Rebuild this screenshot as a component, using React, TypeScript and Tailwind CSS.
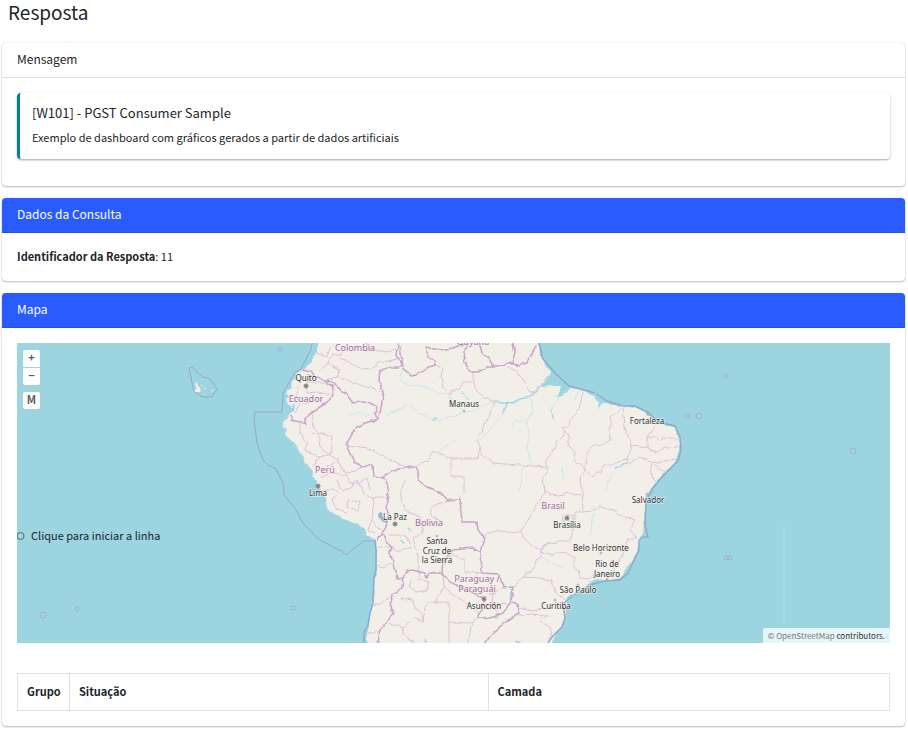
import type { ReactNode } from 'react'

const OCEAN = '#9cd5e0'
const LAND = '#f2efe9'

const COUNTRY_BORDERS = [
  'M303 370 311 372 317 378 325 380 327 383 334 387 333 395 327 403 318 408 310 413 305 421 305 425 300 422 291 420 291 415',
  'M325 380 330 381 337 385 342 392 347 395 353 403 362 402 370 403 377 407 375 413 377 419',
  'M378 419 381 408 383 392 379 380 380 370 387 368 398 368 403 365 397 357 398 343',
  'M378 419 368 422 355 428 350 438 347 443 347 448 352 456 355 462 362 468 368 465 373 465 374 477 383 477 393 470 407 468 418 467 418 480 427 487 440 492 448 500 460 500 462 522 477 522 478 530 485 538 481 552 482 573',
  'M400 347 403 367 410 376 417 375 427 368 435 365 434 361 428 357 425 347 440 350 453 348 463 344',
  'M466 343 464 360 470 372 478 372 487 367 497 367 508 363 518 365 527 363 535 347',
  'M480 343 482 353 490 360 493 367',
  'M513 343 515 353 512 363',
  'M383 477 389 488 387 500 386 507 388 513 388 523 383 532 377 540',
  'M383 532 387 543 392 547 390 553 392 558 395 568 398 579 403 578 402 588 392 595 391 606 393 613 386 624 380 630 378 643',
  'M403 578 407 571 412 570 425 573 427 578 429 573 442 573 450 582 467 590 484 598 482 608 477 617 490 618 503 613 511 602',
  'M442 573 443 560 453 550 472 548 481 553',
  'M482 573 498 574 501 580 503 588 513 587 511 602 517 603 518 613 502 625 493 633 485 643',
]

const STATE_BORDERS = [
  // Brasil
  'M435 365 443 368 441 376 443 388 450 395 452 390 460 390 463 382 473 382 473 372',
  'M473 382 475 390 484 397 495 402 477 440 480 447 483 456 492 463 547 467',
  'M480 447 478 458 451 458 451 477 464 477 464 493 460 500',
  'M451 458 447 457 440 452 433 452 428 460 417 465 408 467 390 461',
  'M348 445 367 448 383 456 400 465',
  'M508 367 518 372 525 383 529 391 532 393 537 392 547 378',
  'M548 467 543 478 545 493 536 505 530 517 522 530 523 537 532 546 540 550 545 544 550 543',
  'M522 533 507 532 499 530 485 535',
  'M542 552 533 568 523 577 513 588',
  'M523 577 540 578 552 580 555 592 565 600',
  'M518 615 533 614 550 617',
  'M518 608 533 611 550 607',
  'M583 392 580 406 577 413 570 420 569 425 562 428 570 437 568 445 575 452 575 462 582 466 585 470 580 477 582 493 583 512',
  'M565 430 563 437 556 442 555 448 547 460 547 467',
  'M620 408 610 418 611 425 609 430 610 440 602 445 596 444 588 450 585 470',
  'M623 408 625 427 631 445 632 449 627 458 612 465 602 465 603 472 597 472 593 477 585 470',
  'M655 425 650 432 647 438 647 448 631 446',
  'M647 438 655 437 660 441 663 437 678 439',
  'M647 448 657 452 665 448 678 447',
  'M627 458 629 463 640 457 648 460 657 463 668 460 677 459',
  'M652 463 650 473 655 482 M652 463 667 473',
  'M543 480 545 491 551 494 558 495 568 493 580 495',
  'M583 512 592 511 600 506 606 509 613 510 620 515 635 520 630 530 637 538 628 538 625 548 620 560 612 573 593 576 588 579 580 578 578 570 573 566 575 558 568 554 558 553 550 555 540 553 547 543 558 542 570 540 573 530 570 525 575 519 575 512 583 512',
  'M563 515h10v6h-10z',
  'M540 622 550 627 552 633 548 640',
  // Colombia, Ecuador
  'M317 353 327 357 330 348 335 345',
  'M320 370 328 363 332 355 340 355 345 347',
  'M328 363 334 368 340 370 337 377 325 380',
  'M340 358 346 360 353 365 362 369 373 368 378 362 389 361 400 358',
  'M337 377 353 382 365 387 375 389 383 393',
  'M365 343 373 350 387 352 400 347',
  'M300 377 308 383 325 383 M298 387 297 395 300 403 295 412',
  'M308 383 307 393 318 392 330 395 M302 403 318 402 M292 396 305 398',
  // Perú
  'M312 412 313 427 318 433 320 447 330 455',
  'M300 422 300 433 307 443 305 450 318 457 315 465',
  'M313 433 323 434 332 437 330 455 318 457',
  'M330 455 338 460 328 467 332 473 321 477',
  'M338 460 340 469 350 473 362 468',
  'M332 473 347 475 350 483 360 483 367 478 370 490',
  'M322 492 332 488 340 493 332 500 337 510 347 513',
  'M348 500 360 502 358 510 348 508 348 500',
  'M336 480 343 490 350 489 357 480 363 493 373 497 387 497',
  'M373 497 374 509 372 520 368 530 M372 520 378 528 383 532 M368 530 375 533',
  // Chile
  'M377 547 390 547 M376 565 383 567 392 563 M373 605 383 603 387 599 393 598 M368 633 378 633',
  // Bolivia
  'M405 480 400 493 402 503 405 510 420 517 423 533 413 537 418 557 418 572',
  'M442 523 431 515 431 508 437 504 447 502 460 500',
  'M390 535 405 535 408 541 410 547 397 552 390 547',
  // Argentina, Paraguay
  'M412 580 410 587 417 592 428 590 428 582 418 578 419 572',
  'M400 598 413 600 415 608 422 613 423 622 425 607 427 602 449 602 449 643',
  'M443 573 444 588 435 602 M444 588 462 600 478 612',
  'M449 622 472 623 477 617 M472 623 468 643',
  'M390 623 403 628 405 636 415 643 M423 622 413 618 407 623 403 628',
  'M445 557 456 556 465 560 465 572 482 573',
  'M484 598 493 593 503 588 M493 593 492 606 497 613 M484 606 505 603 509 606',
]

const RIVERS = [
  'M390 412 398 411 407 405 417 411 427 418 436 421 450 417 465 412 477 410 486 404 495 402',
  'M402 370 401 381 408 385 427 387 440 393 447 395 455 404 462 410',
  'M507 403 503 415 490 429 480 440',
  'M530 398 533 412 524 420 512 423 513 428 M527 420 529 436 527 448 531 463',
  'M553 418 552 407 560 396',
  'M540 556 550 562 563 568 M533 568 525 575 M540 550 550 543',
  'M350 415 360 412 366 417 375 413 M385 417 400 408',
  'M612 475 608 481 606 490 M562 467 564 480',
  'M523 468 522 480 519 490 M590 535 593 515 601 507',
  'M575 400 579 391 M456 440 440 450',
]

const WIDE_WATER = [
  'M495 401 503 402 513 403 520 399 530 397 538 390 544 383 548 380',
  'M507 403 504 413 M462 393 468 398 M552 411 553 419 M615 468 620 466 627 463',
  'M548 377 555 385 563 387 M538 387 545 387 M561 394 567 389 M595 394 600 405 606 402',
  'M402 540 404 543 M408 529 410 531 M433 420 436 417',
  'M424 640 427 641 M516 642 520 642 M495 618 498 617',
  'M512 590 510 600 M603 580 590 582 M568 598 580 590',
]

const ATOLLS = [
  [280, 349, 2], [43, 615, 3], [77, 609, 2], [726, 376, 2], [687, 416, 2],
  [699, 416, 3], [853, 451, 3], [726, 558, 2], [730, 558, 2],
]

type Place = { name: string; x: number; y: number; dot?: [number, number]; capital?: boolean }

const CITIES: Place[] = [
  { name: 'Quito', x: 306, y: 381, dot: [306, 386], capital: true },
  { name: 'Lima', x: 318, y: 496, dot: [318, 486], capital: true },
  { name: 'La Paz', x: 395, y: 520, dot: [395, 524], capital: true },
  { name: 'Manaus', x: 464, y: 407, dot: [464, 411] },
  { name: 'Santa', x: 437, y: 544, dot: [437, 536] },
  { name: 'Cruz de', x: 437, y: 554 },
  { name: 'la Sierra', x: 437, y: 563 },
  { name: 'Asunción', x: 484, y: 609, dot: [484, 599], capital: true },
  { name: 'Fortaleza', x: 647, y: 424, dot: [648, 414] },
  { name: 'Salvador', x: 648, y: 503, dot: [647, 494] },
  { name: 'Brasília', x: 567, y: 528, dot: [567, 518], capital: true },
  { name: 'Belo Horizonte', x: 601, y: 551, dot: [601, 553] },
  { name: 'Rio de', x: 607, y: 567 },
  { name: 'Janeiro', x: 607, y: 577, dot: [607, 579] },
  { name: 'São Paulo', x: 578, y: 593, dot: [578, 585] },
  { name: 'Curitiba', x: 556, y: 609, dot: [555, 600] },
]

const COUNTRIES: Place[] = [
  { name: 'Colombia', x: 355, y: 351 },
  { name: 'Guyana', x: 473, y: 345 },
  { name: 'Ecuador', x: 306, y: 402 },
  { name: 'Perú', x: 325, y: 473 },
  { name: 'Bolivia', x: 429, y: 526 },
  { name: 'Brasil', x: 553, y: 509 },
  { name: 'Paraguay /', x: 477, y: 582 },
  { name: 'Paraguái', x: 477, y: 592 },
]

function MapDrawing() {
  return (
    <svg
      viewBox="17 343 873 300"
      preserveAspectRatio="xMidYMid slice"
      className="block h-full w-full"
      role="img"
      aria-label="Mapa da América do Sul"
    >
      {/* roughens borders and coast so they don't read as straight segments */}
      <filter id="rough" filterUnits="userSpaceOnUse" x="17" y="343" width="873" height="300">
        <feTurbulence type="fractalNoise" baseFrequency="0.14" numOctaves="2" seed="4" />
        <feDisplacementMap in="SourceGraphic" scale="4" xChannelSelector="R" yChannelSelector="G" />
      </filter>

      <rect x="17" y="343" width="873" height="300" fill={OCEAN} />

      {/* South America */}
      <path
        fill={LAND}
        filter="url(#rough)"
        d="M317 335V353L312 358 312 362 305 368 301 371 295 373 295 379 292 382 291 388 287 392 289 397 286 400 288 404 292 407 295 404 294 411 290 413 286 419 283 421 284 427 287 430 285 435 293 442 302 455 307 465 312 473 316 482 318 487 322 492 325 498 327 508 333 513 340 517 348 521 355 523 365 529 367 535 375 540 377 550 377 570 375 577 374 587 373 603 370 617 368 630 366 650H548L558 630 565 620 566 605 568 598 580 590 593 582 605 580 620 578 627 568 637 552 638 542 643 533 644 523 645 500 648 493 653 486 658 480 662 476 675 462 679 450 679 440 675 427 662 425 652 418 645 412 635 407 623 406 612 405 607 403 602 404 599 408 597 401 594 397 583 390 575 388 567 390 562 396 557 397 560 391 563 387 549 385 543 387 541 384 547 379 550 375 550 370 542 361 540 352 535 335Z"
      />
      {/* keeps the clipped edges of the land solid */}
      <path fill={LAND} d="M319 343H533V348H319ZM369 638H547V643H369Z" />
      <g fill={LAND}>
        <path d="M195 384l2-2 1 4 3 3-1 3-5 0-1-2 3-1z" />
        <path d="M201 385h2v1h-2zM204 388h2v1h-2zM212 390l2-1-1 2-2 1zM202 379h1v1h-1zM204 394h1v1h-1z" />
      </g>

      {/* Maritime limits */}
      <g fill="none" stroke="#99a5c9" strokeLinejoin="round">
        <path d="M312 343 311 349 303 365 300 370 295 372 283 393 282 412H255L254 420 257 443 263 460 268 465 276 469 283 483 284 495 295 508 303 523 318 539 335 548 342 551 346 555 355 548 363 541H375" />
        <path
          stroke="#8fa9cb"
          strokeWidth="1.5"
          d="M375 540 376 550 376 570 374 578 373 603 370 613 368 625 364 632 364 643M539 343 542 355 543 359 555 373 569 386 595 393 607 401 623 406 635 406 649 413 658 422 675 426 680 437 681 450 678 461 662 477 653 488 646 501 645 526 648 537 643 537 639 540 639 550 628 573 620 580 605 581 593 584 578 592 567 600 563 605 565 618 562 627 552 637 548 643"
        />
        <path d="M189 368 192 367 198 373 203 377 210 379 217 389 212 397 203 397 194 392Z" />
      </g>
      <g fill="none" stroke="#a5acce">
        {ATOLLS.map(([cx, cy, r]) => (
          <circle key={`${cx}-${cy}`} cx={cx} cy={cy} r={r} />
        ))}
        <ellipse cx="293" cy="608" rx="3" ry="2" />
      </g>
      <path d="M784 527V624" stroke="#a5dae4" strokeWidth="2" />

      <g fill="none" strokeLinejoin="round" strokeLinecap="round" filter="url(#rough)">
        <path d={RIVERS.join('')} stroke="#cbe6e9" />
        <path d={WIDE_WATER.join('')} stroke="#9fd8e2" strokeWidth="1.5" />
        <path d="M380 515 382 519 387 522" stroke="#8bb5d4" strokeWidth="4" />
        <path d={STATE_BORDERS.join('')} stroke="#dcc2d6" />
        <path d={COUNTRY_BORDERS.join('')} stroke="#caa5c6" strokeWidth="1.5" />
      </g>

      <g fill="none" stroke="#777">
        {CITIES.map(({ name, dot, capital }) =>
          dot ? (
            <g key={name}>
              <circle cx={dot[0]} cy={dot[1]} r={capital ? 2 : 1} fill={LAND} strokeWidth={capital ? 1 : 0.5} />
              {capital && <circle cx={dot[0]} cy={dot[1]} r="1" fill="#555" stroke="none" />}
            </g>
          ) : null
        )}
      </g>

      <g
        textAnchor="middle"
        fontFamily="'Noto Sans', sans-serif"
        stroke="#f6f4f0"
        strokeWidth="1.5"
        strokeOpacity="0.7"
        paintOrder="stroke"
      >
        <g fill="#a06a9f" fontSize="9">
          {COUNTRIES.map(({ name, x, y }) => (
            <text key={name} x={x} y={y}>{name}</text>
          ))}
        </g>
        <g fill="#333" fontSize="8">
          {CITIES.map(({ name, x, y }) => (
            <text key={name} x={x} y={y}>{name}</text>
          ))}
        </g>
      </g>
    </svg>
  )
}

function Card({ title, primary, children }: { title: string; primary?: boolean; children: ReactNode }) {
  return (
    <section className="rounded bg-white shadow-[0_0_1px_rgba(0,0,0,0.3),0_1px_2px_rgba(0,0,0,0.25)]">
      <h2
        className={
          primary
            ? 'rounded-t border-b border-[#2251db] bg-[#295bff] px-[15px] pt-[7px] pb-[9px] text-[12px] leading-[18px] text-white'
            : 'rounded-t border-b border-[#dfdfdf] px-[15px] pt-[7px] pb-[9px] text-[12px] leading-[18px]'
        }
      >
        {title}
      </h2>
      <div className="p-[15px]">{children}</div>
    </section>
  )
}

function MapView() {
  const control =
    'flex h-[17px] w-[17px] items-center justify-center bg-white pb-0.5 text-[11px] leading-none font-bold text-[#5c5c5c]'

  return (
    <div className="relative h-[300px] overflow-hidden bg-[#9cd5e0]">
      <MapDrawing />
      <div className="absolute top-[7px] left-1.5 flex flex-col gap-px">
        <button type="button" aria-label="Aproximar" className={`${control} rounded-t-xs`}>+</button>
        <button type="button" aria-label="Afastar" className={`${control} rounded-b-xs`}>−</button>
      </div>
      <button type="button" className={`${control} absolute top-[49px] left-1.5 rounded-xs`}>M</button>
      <div className="absolute top-[183px] left-0 flex items-center gap-1.5 text-[11px] leading-[18px]">
        <svg width="8" height="10" viewBox="0 0 8 10" aria-hidden>
          <circle cx="3.5" cy="6" r="3.5" fill="none" stroke="#48686d" />
        </svg>
        Clique para iniciar a linha
      </div>
      <div className="absolute right-0 bottom-0 rounded-tl-xs bg-white/75 px-[5px] text-[8px] leading-[15px] text-[#333]">
        <span className="text-[#666]">©</span>{' '}
        <a href="#osm" className="text-[#777]">OpenStreetMap</a> contributors.
      </div>
    </div>
  )
}

export default function App() {
  return (
    <main className="flex flex-col gap-3 bg-white pr-[3px] pb-1 pl-0.5 font-['Source_Sans_Pro','Noto_Sans_CJK_SC',sans-serif] text-[11px] leading-[18px] text-[#212529]">
      <h1 className="px-1.5 pb-[7px] text-[19px] leading-[24px]">Resposta</h1>

      <Card title="Mensagem">
        <div className="mb-3 rounded border-l-3 border-[#00838f] px-3 pt-[11px] pb-[13px] shadow-[0_1px_3px_rgba(0,0,0,0.12),0_1px_2px_rgba(0,0,0,0.24)]">
          <h3 className="text-[13px] leading-[18px]">[W101] - PGST Consumer Sample</h3>
          <p className="pt-1.5">Exemplo de dashboard com gráficos gerados a partir de dados artificiais</p>
        </div>
      </Card>

      <Card title="Dados da Consulta" primary>
        <p className="leading-4 pb-0.5">
          <strong>Identificador da Resposta</strong>: 11
        </p>
      </Card>

      <Card title="Mapa" primary>
        <MapView />
        <table className="mt-[30px] w-full table-fixed border-collapse border border-[#dee2e6] text-left">
          <thead>
            <tr>
              <th className="w-[52px] border border-[#dee2e6] px-[9px] pt-2 pb-2.5">Grupo</th>
              <th className="w-[48%] border border-[#dee2e6] px-[9px] pt-2 pb-2.5">Situação</th>
              <th className="border border-[#dee2e6] px-[9px] pt-2 pb-2.5">Camada</th>
            </tr>
          </thead>
        </table>
      </Card>
    </main>
  )
}
